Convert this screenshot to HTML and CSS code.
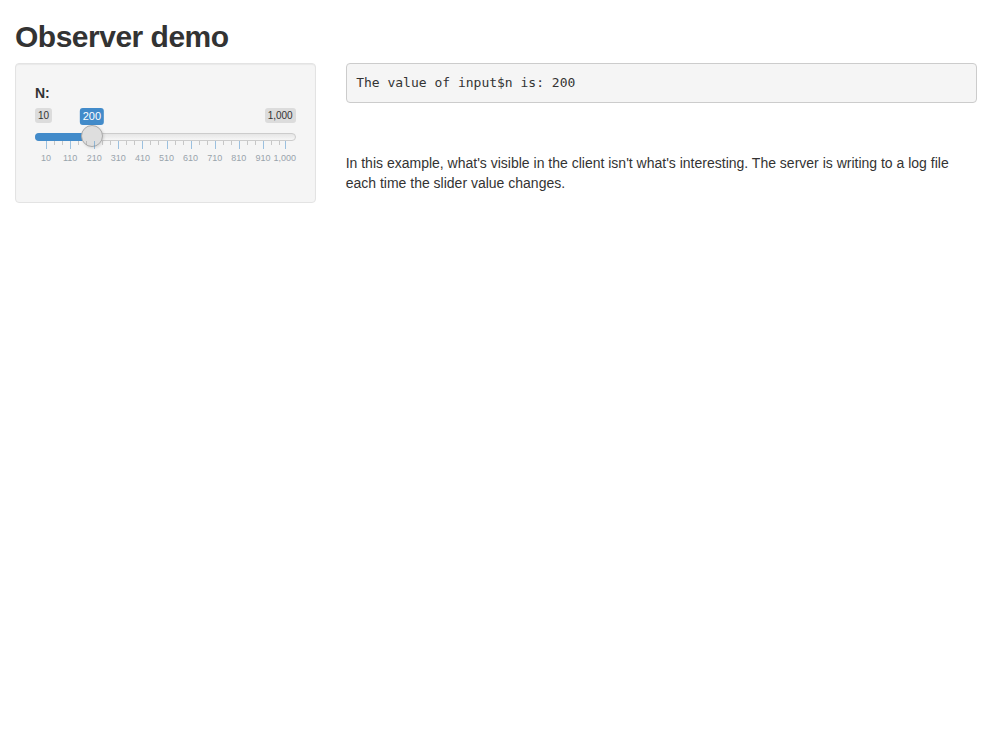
FILE: index.html
```html
<!DOCTYPE html>
<html>
<head>
<meta charset="utf-8">
<title>Observer demo</title>
<link rel="stylesheet" href="styles.css">
</head>
<body>
<div class="container">
  <h2 class="title">Observer demo</h2>
  <div class="row">
    <div class="col-side">
      <div class="well">
        <div class="form-group">
          <label class="control-label">N:</label>
          <div class="irs">
            <div class="irs-line"></div>
            <div class="irs-bar" style="width: 56.9px;"></div>
            <span class="irs-min">10</span>
            <span class="irs-max">1,000</span>
            <span class="irs-single" style="left: 56.9px;">200</span>
            <span class="irs-slider" style="left: 45.9px;"></span>
            <div class="irs-grid">
              <span class="pol" style="left: 0%;"></span>
              <span class="pol small" style="left: 3.367%;"></span>
              <span class="pol small" style="left: 6.734%;"></span>
              <span class="pol" style="left: 10.101%;"></span>
              <span class="pol small" style="left: 13.468%;"></span>
              <span class="pol small" style="left: 16.835%;"></span>
              <span class="pol" style="left: 20.202%;"></span>
              <span class="pol small" style="left: 23.569%;"></span>
              <span class="pol small" style="left: 26.936%;"></span>
              <span class="pol" style="left: 30.303%;"></span>
              <span class="pol small" style="left: 33.670%;"></span>
              <span class="pol small" style="left: 37.037%;"></span>
              <span class="pol" style="left: 40.404%;"></span>
              <span class="pol small" style="left: 43.771%;"></span>
              <span class="pol small" style="left: 47.138%;"></span>
              <span class="pol" style="left: 50.505%;"></span>
              <span class="pol small" style="left: 53.872%;"></span>
              <span class="pol small" style="left: 57.239%;"></span>
              <span class="pol" style="left: 60.606%;"></span>
              <span class="pol small" style="left: 63.973%;"></span>
              <span class="pol small" style="left: 67.340%;"></span>
              <span class="pol" style="left: 70.707%;"></span>
              <span class="pol small" style="left: 74.074%;"></span>
              <span class="pol small" style="left: 77.441%;"></span>
              <span class="pol" style="left: 80.808%;"></span>
              <span class="pol small" style="left: 84.175%;"></span>
              <span class="pol small" style="left: 87.542%;"></span>
              <span class="pol" style="left: 90.909%;"></span>
              <span class="pol small" style="left: 94.276%;"></span>
              <span class="pol small" style="left: 97.643%;"></span>
              <span class="pol" style="left: 100%;"></span>
              <span class="gtext" style="left: 0%;">10</span>
              <span class="gtext" style="left: 10.101%;">110</span>
              <span class="gtext" style="left: 20.202%;">210</span>
              <span class="gtext" style="left: 30.303%;">310</span>
              <span class="gtext" style="left: 40.404%;">410</span>
              <span class="gtext" style="left: 50.505%;">510</span>
              <span class="gtext" style="left: 60.606%;">610</span>
              <span class="gtext" style="left: 70.707%;">710</span>
              <span class="gtext" style="left: 80.808%;">810</span>
              <span class="gtext" style="left: 90.909%;">910</span>
              <span class="gtext" style="left: 100%;">1,000</span>
            </div>
          </div>
        </div>
      </div>
    </div>
    <div class="col-main">
      <pre class="output">The value of input$n is: 200</pre>
      <div class="spacer"></div>
      <p class="note">In this example, what's visible in the client isn't what's interesting. The server is writing to a log file each time the slider value changes.</p>
    </div>
  </div>
</div>
</body>
</html>
```

FILE: styles.css
```css
* { box-sizing: border-box; }

html, body {
  margin: 0;
  padding: 0;
  background: #ffffff;
}

body {
  font-family: "Liberation Sans", Arial, sans-serif;
  font-size: 14px;
  line-height: 1.42857143;
  color: #333333;
}

.container {
  padding: 0 15px;
}

.title {
  font-size: 30px;
  font-weight: bold;
  letter-spacing: -0.5px;
  line-height: 1.1;
  margin: 20px 0 10px;
}

.row {
  display: flex;
  margin: 0 -15px;
}

.col-side {
  flex: 0 0 33.33333%;
  padding: 0 15px;
}

.col-main {
  flex: 0 0 66.66667%;
  padding: 0 15px;
}

.well {
  background: #f5f5f5;
  border: 1px solid #e3e3e3;
  border-radius: 4px;
  padding: 19px;
  box-shadow: inset 0 1px 1px rgba(0, 0, 0, 0.05);
}

.form-group {
  margin-bottom: 15px;
}

.control-label {
  display: inline-block;
  font-weight: bold;
  margin-bottom: 5px;
}

.irs {
  position: relative;
  height: 60px;
}

.irs-line {
  position: absolute;
  left: 0;
  right: 0;
  top: 25px;
  height: 8px;
  border: 1px solid #cccccc;
  border-radius: 16px;
  background: linear-gradient(to bottom, #dddddd -50%, #ffffff 150%);
}

.irs-bar {
  position: absolute;
  left: 0;
  top: 25px;
  height: 8px;
  background: #428bca;
  border-radius: 16px 0 0 16px;
}

.irs-min, .irs-max {
  position: absolute;
  top: 0;
  font-size: 10px;
  line-height: 1.333;
  padding: 1px 3px;
  color: #333333;
  background: rgba(0, 0, 0, 0.1);
  border-radius: 3px;
}

.irs-min { left: 0; }
.irs-max { right: 0; }

.irs-single {
  position: absolute;
  top: 0;
  transform: translateX(-50%);
  font-size: 11px;
  line-height: 1.333;
  padding: 1px 3px;
  color: #ffffff;
  background: #428bca;
  border-radius: 3px;
}

.irs-slider {
  position: absolute;
  top: 17px;
  width: 22px;
  height: 22px;
  border: 1px solid #aaaaaa;
  border-radius: 27px;
  background: #dedede;
  box-shadow: 1px 1px 3px rgba(0, 0, 0, 0.12);
}

.irs-grid {
  position: absolute;
  left: 11px;
  right: 11px;
  bottom: 0;
  height: 27px;
}

.pol {
  position: absolute;
  top: 0;
  width: 1px;
  height: 8px;
  background: #428bca;
  opacity: 0.5;
}

.pol.small {
  height: 4px;
  background: #999999;
}

.gtext {
  position: absolute;
  bottom: 5px;
  transform: translateX(-50%);
  font-size: 9px;
  line-height: 9px;
  white-space: nowrap;
  color: #99a4ac;
}

.output {
  display: block;
  margin: 0 0 10px;
  padding: 9.5px;
  font-family: "DejaVu Sans Mono", "Liberation Mono", monospace;
  font-size: 13px;
  line-height: 1.42857143;
  color: #333333;
  background: #f5f5f5;
  border: 1px solid #cccccc;
  border-radius: 4px;
}

.spacer {
  height: 40px;
}

.note {
  margin: 0 0 10px;
}
```
